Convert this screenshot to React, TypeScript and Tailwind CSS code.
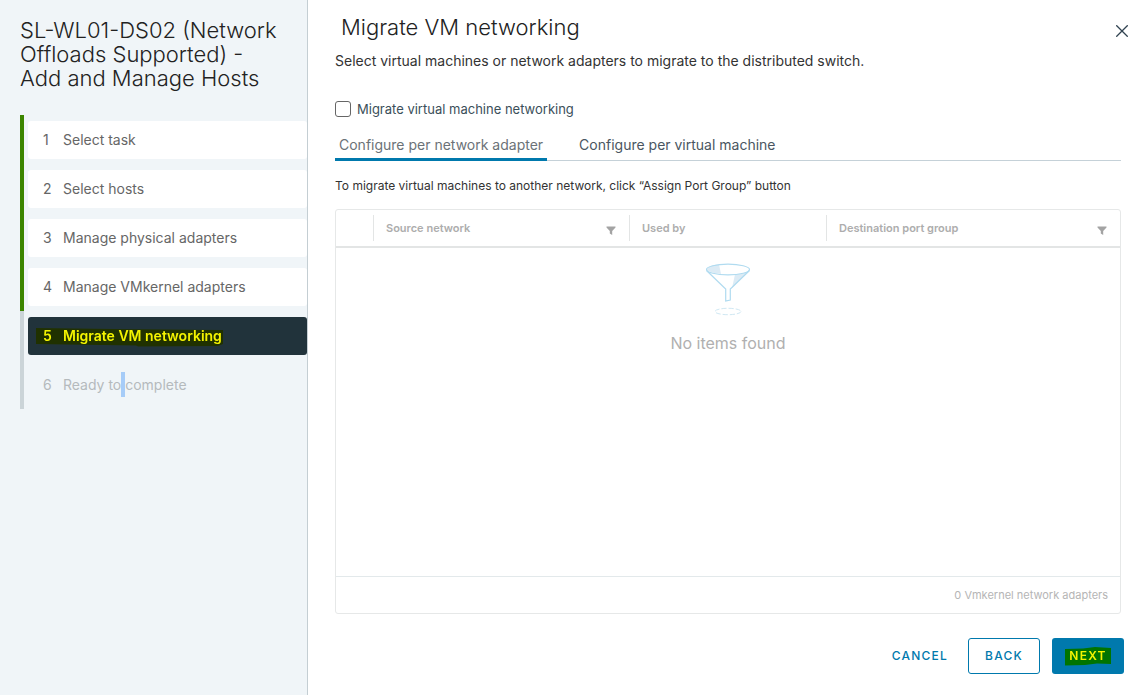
import React, { useState } from 'react';

interface Step {
  label: React.ReactNode;
  status: 'done' | 'current' | 'pending';
}

const steps: Step[] = [
  { label: 'Select task', status: 'done' },
  { label: 'Select hosts', status: 'done' },
  { label: 'Manage physical adapters', status: 'done' },
  { label: 'Manage VMkernel adapters', status: 'done' },
  { label: 'Migrate VM networking', status: 'current' },
  {
    label: (
      <>
        Ready to<span className="bg-[#a6ccf8] py-1 whitespace-pre"> </span>complete
      </>
    ),
    status: 'pending',
  },
];

const tabs = ['Configure per network adapter', 'Configure per virtual machine'];

const stepStyles = {
  done: 'bg-white text-[#666666]',
  current: 'bg-[#21333b] text-white font-semibold',
  pending: 'text-[#b5babd]',
};

const FilterIcon: React.FC = () => (
  <svg className="w-[10px] h-[9px]" viewBox="0 0 10 9" fill="#a3a3a3" aria-hidden="true">
    <path d="M0.5 0.5h9v1L6.2 5v4L3.8 7.6V5L0.5 1.5z" />
  </svg>
);

const FunnelIllustration: React.FC = () => (
  <svg className="w-[46px] h-[54px]" viewBox="0 0 46 54" fill="none" aria-hidden="true">
    <path d="M2 6.5C4 3 9 1.5 14 1.2L16 11C8 10 3 8.5 2 6.5z" fill="#dcebf5" />
    <path d="M43.5 8.5L27 25L30 11.5C36 11 41 10 43.5 8.5z" fill="#dcebf5" />
    <ellipse cx="23" cy="6.5" rx="21.5" ry="5.3" stroke="#b0dbf0" strokeWidth="1.2" />
    <path d="M1.5 7.5L20.7 26V38L25.3 37V26L44.5 7.5" stroke="#b0dbf0" strokeWidth="1.2" />
    <ellipse cx="23" cy="48.5" rx="13" ry="3.2" stroke="#d0e8f3" strokeDasharray="5 2" />
  </svg>
);

const StepItem: React.FC<{ step: Step; index: number }> = ({ step, index }) => (
  <li className={`border-l-4 pl-1 pt-[6px] pb-[5px] ${step.status === 'done' ? 'border-[#3c8500]' : 'border-[#cbd4d8]'}`}>
    <button
      type="button"
      disabled={step.status === 'pending'}
      aria-current={step.status === 'current' ? 'step' : undefined}
      className={`relative isolate flex items-center w-full h-[38px] pl-[15px] rounded-[3px] text-left text-sm ${stepStyles[step.status]}`}
    >
      <span className="w-5">{index + 1}</span>
      <span>{step.label}</span>
      {step.status === 'current' && (
        <svg className="absolute left-2 top-[11px] w-[188px] h-5 mix-blend-multiply" viewBox="0 0 188 20" aria-hidden="true">
          <path d="M0 0L78 1L187 2V16L182 18L102 18.5L100 17.5L30 16.5L0 16z" fill="#f4f400" />
        </svg>
      )}
    </button>
  </li>
);

const App: React.FC = () => {
  const [activeTab, setActiveTab] = useState(0);

  return (
    <div className="flex min-h-screen bg-white font-['Inter',sans-serif] text-black">
      <aside className="w-[308px] shrink-0 pl-5 pt-[18px] bg-[#f0f5f8] border-r border-[#c4ced3]">
        <h1 className="pr-5 text-[22px] leading-6 font-light text-[#222222]">
          SL-WL01-DS02 (Network Offloads Supported) - Add and Manage Hosts
        </h1>
        <ol className="mt-[25px]">
          {steps.map((step, index) => (
            <StepItem key={index} step={step} index={index} />
          ))}
        </ol>
      </aside>

      <main className="flex flex-col flex-1 min-w-0 pl-[27px] pr-5 pb-[21px]">
        <header className="flex items-start justify-between pl-[6px]">
          <h2 className="pt-[11px] text-[22px] leading-8 font-light text-[#222222]">Migrate VM networking</h2>
          <button type="button" aria-label="Close" className="mt-[25px] -mr-1">
            <svg className="w-3 h-3" viewBox="0 0 12 12" stroke="#304250" strokeWidth="1.3" aria-hidden="true">
              <path d="M0.3 0.3l11.4 11.4M11.7 0.3L0.3 11.7" />
            </svg>
          </button>
        </header>

        <div className="flex flex-col flex-1 pr-[3px]">
          <p className="mt-2 text-sm leading-5 text-[#333333]">
            Select virtual machines or network adapters to migrate to the distributed switch.
          </p>

          <div className="flex items-center mt-7">
            <input
              id="migrate-vm"
              type="checkbox"
              className="appearance-none w-4 h-4 mr-[6px] border border-[#666666] rounded-[3px] bg-white checked:bg-[#0079b8]"
            />
            <label htmlFor="migrate-vm" className="text-[13px] leading-5 text-[#3b4f5a]">
              Migrate virtual machine networking
            </label>
          </div>

          <div role="tablist" className="flex mt-3 gap-7 border-b border-[#c5d1d8]">
            {tabs.map((tab, index) => (
              <button
                key={tab}
                type="button"
                role="tab"
                aria-selected={index === activeTab}
                onClick={() => setActiveTab(index)}
                className={`h-[30px] -mb-px px-1 border-b-3 text-sm ${
                  index === activeTab ? 'border-[#0079ad] text-[#6b7277]' : 'border-transparent text-[#4a5661]'
                }`}
              >
                {tab}
              </button>
            ))}
          </div>

          <p className="mt-[15px] text-xs leading-5 text-[#333333]">
            To migrate virtual machines to another network, click “Assign Port Group” button
          </p>

          <section className="flex flex-col flex-1 mt-[13px] border border-[#e6e8e8] rounded-[3px]">
            <table className="w-full table-fixed text-[11px] text-left text-[#adadad]">
              <thead>
                <tr className="h-[37px] border-b-2 border-[#e3e5e5]">
                  <td className="w-[37px]"></td>
                  <th scope="col" className="w-[256px] font-semibold">
                    <div className="flex items-center justify-between h-[26px] pl-3 pr-[13px] border-l border-[#e3e5e5]">
                      Source network
                      <button type="button" aria-label="Filter source network" className="mt-1">
                        <FilterIcon />
                      </button>
                    </div>
                  </th>
                  <th scope="col" className="w-[197px] font-semibold">
                    <div className="flex items-center h-[26px] pl-3 border-l border-[#e3e5e5]">Used by</div>
                  </th>
                  <th scope="col" className="font-semibold">
                    <div className="flex items-center justify-between h-[26px] pl-3 pr-[13px] border-l border-[#e3e5e5]">
                      Destination port group
                      <button type="button" aria-label="Filter destination port group" className="mt-1">
                        <FilterIcon />
                      </button>
                    </div>
                  </th>
                </tr>
              </thead>
            </table>
            <div className="flex flex-col flex-1 items-center pt-[15px]">
              <FunnelIllustration />
              <p className="mt-[14px] text-base leading-6 text-[#b0b0b0]">No items found</p>
            </div>
            <footer className="h-[37px] pr-3 border-t border-[#e3e9eb] text-right text-[11px] leading-9 text-[#b5b5b5]">
              0 Vmkernel network adapters
            </footer>
          </section>
        </div>

        <div className="flex items-center justify-end gap-3 mt-6 text-xs font-medium tracking-widest">
          <button type="button" className="h-9 px-2 text-[#0079ad]">
            CANCEL
          </button>
          <button type="button" className="w-[72px] h-9 border border-[#0079ad] rounded-[3px] text-[#0079ad]">
            BACK
          </button>
          <button type="button" className="relative isolate w-[72px] h-9 rounded-[3px] bg-[#0079ad] text-white font-semibold">
            NEXT
            <svg className="absolute left-[13px] top-[9px] w-[46px] h-[19px] mix-blend-multiply" viewBox="0 0 46 19" aria-hidden="true">
              <path d="M0 2L18 1.5L30 0L46 1V17L32 16.5L20 18L0 18.5z" fill="#f4f400" />
            </svg>
          </button>
        </div>
      </main>
    </div>
  );
};

export default App;
